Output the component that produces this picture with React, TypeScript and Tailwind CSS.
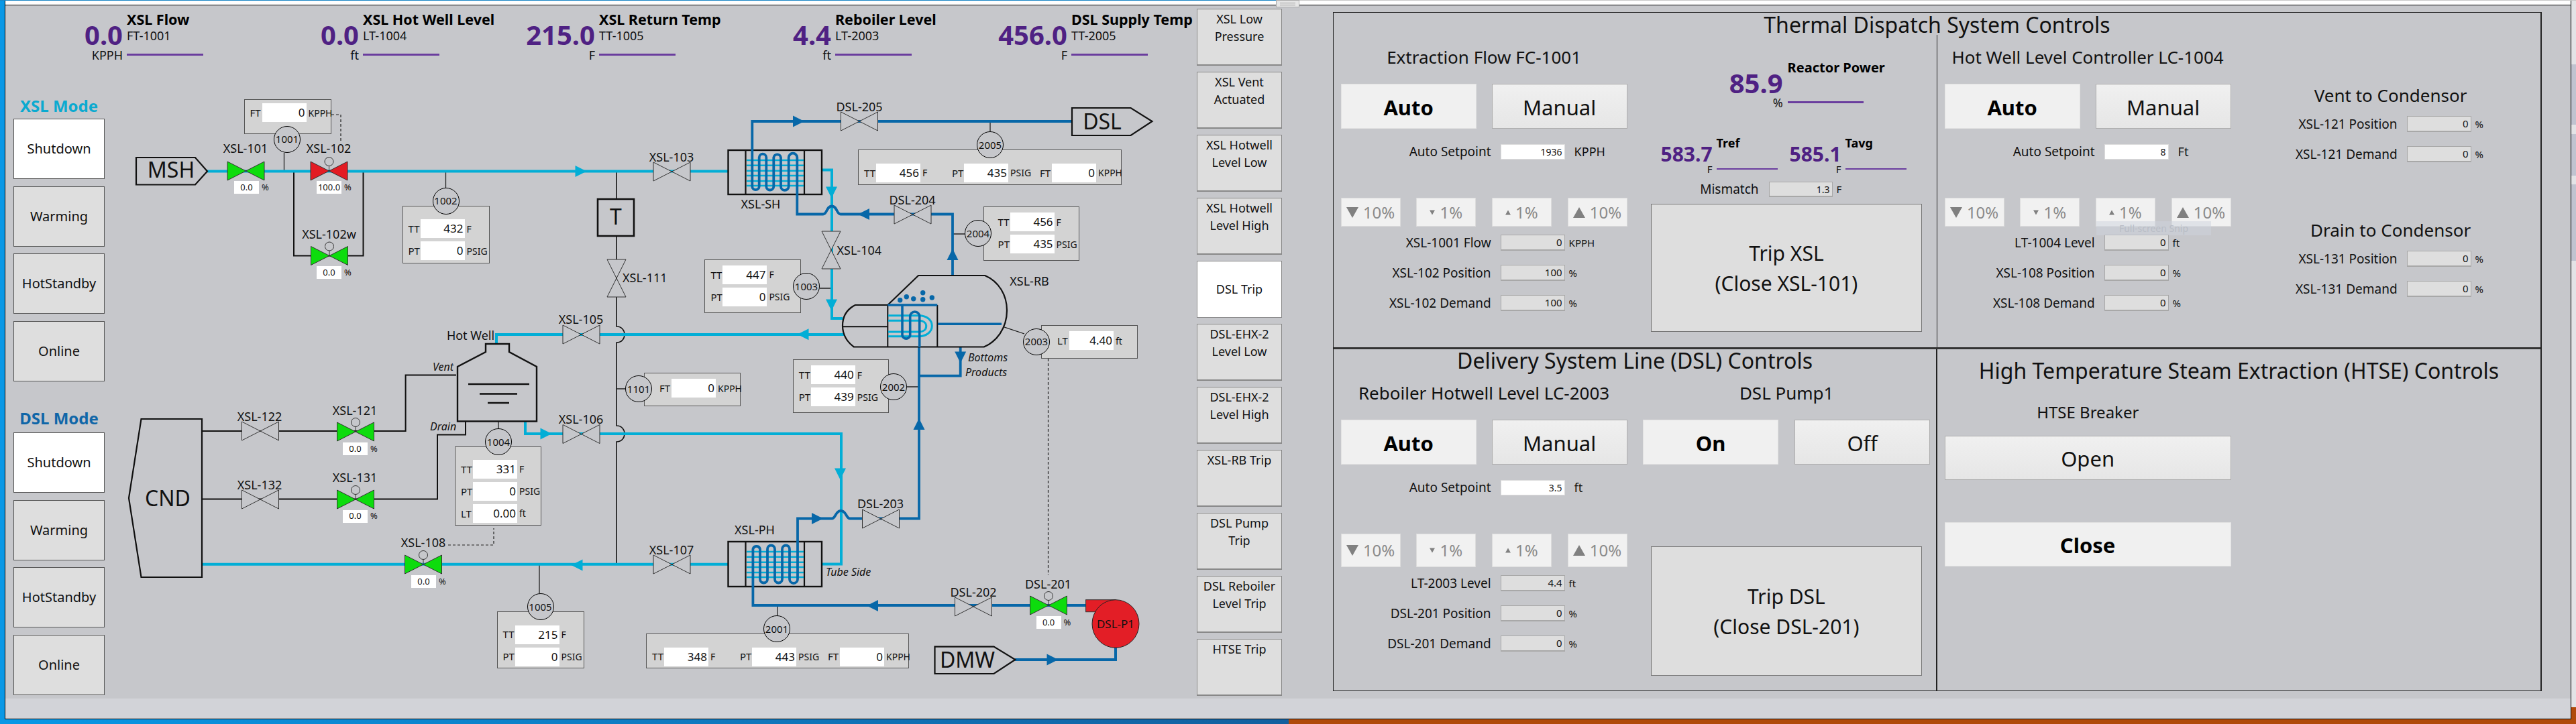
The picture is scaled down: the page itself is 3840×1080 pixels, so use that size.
import React from "react";

const CYAN = "#02aed6";
const BLUE = "#0767a8";
// page position of the diagram canvas
const OX = 160;
const OY = 98;

function Kpi({ name, tag, value, unit }: { name: string; tag: string; value: string; unit: string }) {
  return (
    <div className="flex w-[352px] shrink-0">
      <div className="flex w-[120px] flex-col items-end pt-[25px]">
        <div className="h-[38px] text-[40px] leading-[38px] font-bold text-[#4f2183]">{value}</div>
        <div className="h-[22px] text-[18px] leading-[22px]">{unit}</div>
      </div>
      <div className="ml-[6px] flex flex-col pt-[8px]">
        <div className="h-[26px] text-[21.5px] leading-[26px] font-bold whitespace-nowrap text-black">{name}</div>
        <div className="h-[22px] text-[18px] leading-[22px]">{tag}</div>
        <div className="mt-[16px] h-[3px] w-[114px] bg-[#6a3d9e]" />
      </div>
    </div>
  );
}

function ModeButton({ label, active }: { label: string; active?: boolean }) {
  return (
    <div className={`flex h-[90px] w-[136px] items-center justify-center border border-[#555] text-[20px] ${active ? "bg-white" : "bg-[#dedede]"}`}>
      {label}
    </div>
  );
}

function ModeColumn() {
  return (
    <div className="flex w-[152px] shrink-0 flex-col pl-[12px]">
      <div className="mt-[45px] h-[30px] w-[136px] text-center text-[24px] leading-[30px] font-bold whitespace-nowrap text-[#0baad0]">XSL Mode</div>
      <div className="mt-[4px] flex flex-col gap-[10.7px]">
        {["Shutdown", "Warming", "HotStandby", "Online"].map((m, i) => (
          <ModeButton key={m} label={m} active={i === 0} />
        ))}
      </div>
      <div className="mt-[40px] h-[30px] w-[136px] text-center text-[24px] leading-[30px] font-bold whitespace-nowrap text-[#0f66a8]">DSL Mode</div>
      <div className="mt-[6px] flex flex-col gap-[10.7px]">
        {["Shutdown", "Warming", "HotStandby", "Online"].map((m, i) => (
          <ModeButton key={m} label={m} active={i === 0} />
        ))}
      </div>
    </div>
  );
}

function Valve({ x, y, color, stem, vertical }: { x: number; y: number; color?: string; stem?: boolean; vertical?: boolean }) {
  const fill = color ?? "#c6c7cb";
  if (vertical) {
    return (
      <polygon
        points={`${x - 14},${y - 28} ${x + 14},${y - 28} ${x - 14},${y + 28} ${x + 14},${y + 28}`}
        fill={fill}
        stroke="#333"
        strokeWidth="1"
      />
    );
  }
  return (
    <g stroke="#333" strokeWidth="1">
      <polygon points={`${x - 27.5},${y - 14} ${x + 27.5},${y + 14} ${x + 27.5},${y - 14} ${x - 27.5},${y + 14}`} fill={fill} />
      {stem && (
        <>
          <line x1={x} y1={y} x2={x} y2={y - 8} />
          <circle cx={x} cy={y - 14} r="6.5" fill="#c6c7cb" />
        </>
      )}
    </g>
  );
}

function Arrow({ x, y, dir, color }: { x: number; y: number; dir: "r" | "l" | "u" | "d"; color: string }) {
  const pts = {
    r: `${x - 8.5},${y - 8.5} ${x + 8.5},${y} ${x - 8.5},${y + 8.5}`,
    l: `${x + 8.5},${y - 8.5} ${x - 8.5},${y} ${x + 8.5},${y + 8.5}`,
    u: `${x - 8.5},${y + 8.5} ${x},${y - 8.5} ${x + 8.5},${y + 8.5}`,
    d: `${x - 8.5},${y - 8.5} ${x},${y + 8.5} ${x + 8.5},${y - 8.5}`,
  }[dir];
  return <polygon points={pts} fill={color} />;
}

const TUBE_LINES = [15, 22.7, 30.7, 38, 46, 53];

function Piping() {
  return (
    <svg className="absolute left-0 top-0" width="1624" height="944" viewBox={`${OX} ${OY} 1624 944`} fill="none">
      {/* instrument taps and dashed signals */}
      <path d="M423.5 228V255M664.5 255V280M1476 181V196M932 580H919M1222 430H1239M1352 577H1370M1438 349H1420M1159 903V918M804 842V885M743 628V640M1493 486.7L1527 498" stroke="#222" strokeWidth="1.3" />
      <path d="M494 171H508V211M668 813H736V788M1562.5 535V858" stroke="#222" strokeWidth="1.2" strokeDasharray="4 3" />

      {/* cold side and vent lines */}
      <path d="M438 255V381.5H541.5V255M301 643H604.6V559.6H680M301 744.5H652V648.5H694V628" stroke="#111" strokeWidth="2" />
      <path d="M919 255V487C927 487 931 493 931 499C931 505 927 511 919 511V635C927 635 931 641 931 647C931 653 927 659 919 659V841" stroke="#111" strokeWidth="1.6" />

      {/* steam side */}
      <path d="M309 255.5H1085.5M740 522V499H1258M783 628V647H1254V841.5H1225M301 841.7H1085.5M1225 253.5H1240V475H1256" stroke={CYAN} strokeWidth="4" />

      {/* heat exchangers */}
      {[224, 808].map((top) => (
        <g key={top}>
          <rect x="1085.5" y={top} width="139.5" height={top === 224 ? 66 : 67} fill="#c6c7cb" stroke="#111" strokeWidth="2.4" />
          <path d={`M1111.5 ${top}v67M1199 ${top}v67`} stroke="#111" strokeWidth="2.2" />
          {TUBE_LINES.map((d) => (
            <line key={d} x1="1113" x2="1198" y1={top + d} y2={top + d} stroke={CYAN} strokeWidth="2.6" />
          ))}
        </g>
      ))}

      {/* delivery side */}
      <path
        d="M1598 181H1121.3V278A5.2 5.2 0 0 0 1131.7 278V235A5.3 5.3 0 0 1 1142.3 235V278A5.5 5.5 0 0 0 1153.3 278V235A5.4 5.4 0 0 1 1164 235V278A5.8 5.8 0 0 0 1175.7 278V235A6.3 6.3 0 0 1 1188.3 235V319.5H1227C1233 319.5 1232 307.5 1240 307.5C1248 307.5 1247 319.5 1253 319.5H1420V411"
        stroke={BLUE}
        strokeWidth="3.8"
      />
      <path
        d="M1618 903H1122.4V819A5.5 5.5 0 0 1 1133 819V864A5.5 5.5 0 0 0 1144 864V819A5.5 5.5 0 0 1 1155 819V864A5.5 5.5 0 0 0 1166 864V819A5.5 5.5 0 0 1 1177 819V864A6 6 0 0 0 1189 864V773.5H1240C1246 773.5 1245 762 1253.5 762C1262 762 1261 773.5 1267 773.5H1370V518M1431.7 518V560.7H1370"
        stroke={BLUE}
        strokeWidth="3.8"
      />
      <path d="M1513 984H1663V960" stroke={BLUE} strokeWidth="4" />

      {/* reboiler */}
      <path d="M1275 455H1323.3L1369 411H1468.3C1489 420 1501 440 1501 463C1501 490 1485 510 1466.7 517.5H1273C1262 510 1256 498 1256 486C1256 472 1263 461 1275 455Z" fill="#c6c7cb" stroke="#111" strokeWidth="2.2" />
      <path d="M1256 487.3H1323.3M1323.3 455V517M1397.3 455V517" stroke="#111" strokeWidth="2" />
      <path d="M1324 470.7H1370C1381 470.7 1389.3 477 1389.3 486C1389.3 495 1381 501.7 1370 501.7H1324M1324 478.3H1370C1376 478.3 1380.7 481 1380.7 486.7C1380.7 492 1376 495 1370 495H1324" stroke={CYAN} strokeWidth="3" />
      <path d="M1323.3 455H1397.3M1345 455V500A5.9 5.9 0 0 0 1356.7 500V472A6.9 6.9 0 0 1 1370.7 472V518M1398 483.3H1493" stroke={BLUE} strokeWidth="3.6" />
      {[[1341.7, 447.7], [1351.3, 442.7], [1361.7, 445.7], [1375.7, 436.7], [1375.7, 446.7], [1389.3, 444]].map(([cx, cy]) => (
        <circle key={`${cx}-${cy}`} cx={cx} cy={cy} r="3.7" fill={BLUE} />
      ))}

      {/* hot well */}
      <path d="M724 513H759V525L800 547V628.5H682V547L724 525Z" fill="#c6c7cb" stroke="#111" strokeWidth="2.4" />
      <path d="M698 573H789M715 587.5H771M727 601H759" stroke="#111" strokeWidth="2.4" />

      {/* tags */}
      <g fill="#c6c7cb" stroke="#111" strokeWidth="2.2">
        <polygon points="203,235 291,235 309,255.5 291,275.5 203,275.5" />
        <polygon points="1598,161 1685.6,161 1717.5,181 1685.6,202 1598,202" />
        <polygon points="1393.5,964.6 1481.5,964.6 1513.4,984 1481.5,1005 1393.5,1005" />
        <polygon points="210.5,625 301,625 301,861 210.5,861 192,743" />
        <rect x="891" y="297" width="54" height="55" strokeWidth="2.6" />
      </g>

      {/* valves */}
      <Valve x={366.5} y={255} color="#0ddc0d" />
      <Valve x={490.5} y={255} color="#e31b23" stem />
      <Valve x={491} y={381.5} color="#0ddc0d" stem />
      <Valve x={530} y={644} color="#0ddc0d" stem />
      <Valve x={530} y={745} color="#0ddc0d" stem />
      <Valve x={631} y={842} color="#0ddc0d" stem />
      <Valve x={1563} y={903} color="#0ddc0d" stem />
      <Valve x={388} y={643} />
      <Valve x={388} y={745} />
      <Valve x={866.5} y={499} />
      <Valve x={866.5} y={647.5} />
      <Valve x={1001.5} y={256} />
      <Valve x={1001.5} y={842} />
      <Valve x={1281} y={181} />
      <Valve x={1360.5} y={320} />
      <Valve x={1313} y={774} />
      <Valve x={1451} y={905} />
      <Valve x={919} y={415} vertical />
      <Valve x={1239} y={373} vertical />

      {/* flow arrows */}
      <Arrow x={866} y={255.5} dir="r" color={CYAN} />
      <Arrow x={860} y={843} dir="l" color={CYAN} />
      <Arrow x={814} y={647} dir="r" color={CYAN} />
      <Arrow x={1197} y={498.7} dir="l" color={CYAN} />
      <Arrow x={1239.5} y={287} dir="d" color={CYAN} />
      <Arrow x={1239.5} y={455} dir="d" color={CYAN} />
      <Arrow x={1252.5} y={707} dir="d" color={CYAN} />
      <Arrow x={1190.5} y={181} dir="r" color={BLUE} />
      <Arrow x={1287.5} y={319.5} dir="l" color={BLUE} />
      <Arrow x={1420} y={379.5} dir="u" color={BLUE} />
      <Arrow x={1218.5} y={773.5} dir="r" color={BLUE} />
      <Arrow x={1370} y={632.5} dir="u" color={BLUE} />
      <Arrow x={1300.5} y={903.5} dir="l" color={BLUE} />
      <Arrow x={1569} y={984} dir="r" color={BLUE} />
      <Arrow x={1431.7} y={533} dir="d" color={BLUE} />

      {/* pump */}
      <rect x="1618.6" y="894.7" width="44" height="18" fill="#e31e26" stroke="#333" strokeWidth="1" />
      <ellipse cx="1663" cy="930.5" rx="35" ry="35.8" fill="#e31e26" stroke="#222" strokeWidth="1" />
    </svg>
  );
}

const CENTER_LABELS: [string, number, number][] = [
  ["XSL-101", 366, 221], ["XSL-102", 490, 221], ["XSL-102w", 490.5, 348.5], ["XSL-103", 1001, 234],
  ["XSL-105", 866, 476], ["XSL-106", 866, 625], ["XSL-107", 1001, 820], ["XSL-108", 631, 809],
  ["XSL-121", 529, 611.6], ["XSL-122", 387, 621], ["XSL-131", 529, 711.5], ["XSL-132", 387, 722.5],
  ["DSL-205", 1281, 159], ["DSL-204", 1360, 297.5], ["DSL-203", 1312.5, 751.4], ["DSL-202", 1451, 882.6],
  ["DSL-201", 1562.5, 870.6], ["XSL-SH", 1134, 304], ["XSL-PH", 1125, 790], ["XSL-RB", 1534.5, 419.4],
  ["Hot Well", 701.5, 500],
];

const LEFT_LABELS: [string, number, number][] = [
  ["XSL-111", 928, 414],
  ["XSL-104", 1247.5, 373],
];

const ITALIC_LABELS: [string, number, number][] = [
  ["Vent", 645, 547], ["Drain", 641, 636], ["Bottoms", 1443, 533], ["Products", 1439, 554.5], ["Tube Side", 1231, 853.4],
];

const TAGS: [string, number, number][] = [
  ["MSH", 255, 253], ["DSL", 1643, 181], ["CND", 250, 743], ["DMW", 1442, 983.5], ["T", 918, 323],
];

const CIRCLES: [string, number, number][] = [
  ["1001", 428, 207.6], ["1002", 664.5, 299.6], ["1003", 1202, 427.3], ["2004", 1458, 348], ["2005", 1476, 216],
  ["1101", 952, 580], ["1004", 743, 659], ["1005", 805.5, 905], ["2001", 1158, 938.4], ["2002", 1332, 577], ["2003", 1545, 509.6],
];

const READOUTS: [string, number, number][] = [
  ["0.0", 349, 270], ["100.0", 472, 270], ["0.0", 472, 397], ["0.0", 511, 660], ["0.0", 511, 760.4], ["0.0", 613, 858], ["0.0", 1544.6, 918.8],
];

type Cell = { l: string; v: string; u: string };
type Box = { x: number; y: number; w: number; h: number; pt: number; pl: number; rows: Cell[][] };

const tp = (t: string, p: string): Cell[][] => [
  [{ l: "TT", v: t, u: "F" }],
  [{ l: "PT", v: p, u: "PSIG" }],
];

const BOXES: Box[] = [
  { x: 363.5, y: 148, w: 130, h: 52, pt: 5, pl: 0, rows: [[{ l: "FT", v: "0", u: "KPPH" }]] },
  { x: 599.5, y: 306.5, w: 130, h: 86, pt: 19.5, pl: 0, rows: tp("432", "0") },
  { x: 1050.4, y: 387.4, w: 144, h: 80, pt: 7.6, pl: 0, rows: tp("447", "0") },
  { x: 1465.6, y: 308, w: 143.4, h: 80.5, pt: 8, pl: 13, rows: tp("456", "435") },
  { x: 1181.8, y: 536, w: 143.2, h: 80.4, pt: 8, pl: 0, rows: tp("440", "439") },
  { x: 740.5, y: 912, w: 130, h: 85, pt: 19.5, pl: 0, rows: tp("215", "0") },
  { x: 678, y: 665.7, w: 129, h: 118.8, pt: 19.3, pl: 0, rows: [...tp("331", "0"), [{ l: "LT", v: "0.00", u: "ft" }]] },
  { x: 960, y: 555.5, w: 144, h: 50, pt: 8.5, pl: 14, rows: [[{ l: "FT", v: "0", u: "KPPH" }]] },
  { x: 1552, y: 484.5, w: 144.4, h: 50, pt: 8.5, pl: 15, rows: [[{ l: "LT", v: "4.40", u: "ft" }]] },
  {
    x: 1279, y: 223, w: 392.6, h: 52.5, pt: 19.8, pl: 0,
    rows: [[{ l: "TT", v: "456", u: "F" }, { l: "PT", v: "435", u: "PSIG" }, { l: "FT", v: "0", u: "KPPH" }]],
  },
  {
    x: 963, y: 945.3, w: 391.6, h: 52, pt: 19.3, pl: 0,
    rows: [[{ l: "TT", v: "348", u: "F" }, { l: "PT", v: "443", u: "PSIG" }, { l: "FT", v: "0", u: "KPPH" }]],
  },
];

function InstrumentBox({ box }: { box: Box }) {
  return (
    <div
      className="absolute flex flex-col gap-[5px] border border-[#555] bg-[#d3d3d3]"
      style={{ left: box.x - OX, top: box.y - OY, width: box.w, height: box.h, paddingTop: box.pt, paddingLeft: box.pl }}
    >
      {box.rows.map((row, i) => (
        <div key={i} className="flex h-[28px]">
          {row.map((c) => (
            <div key={c.l} className="flex w-[131px] shrink-0 items-center">
              <span className="w-[26px] pl-[8px] text-[15px]">{c.l}</span>
              <span className="flex h-[28px] w-[66px] items-center justify-end bg-white pr-[2px] text-[17px]">{c.v}</span>
              <span className="ml-[3px] text-[14px] whitespace-nowrap">{c.u}</span>
            </div>
          ))}
        </div>
      ))}
    </div>
  );
}

function Diagram() {
  return (
    <div className="relative h-[944px] w-[1624px] shrink-0 text-[#111]">
      <Piping />
      {BOXES.map((b) => (
        <InstrumentBox key={`${b.x}-${b.y}`} box={b} />
      ))}
      {CIRCLES.map(([n, x, y]) => (
        <div
          key={n}
          className="absolute flex h-[40px] w-[40px] -translate-x-1/2 -translate-y-1/2 items-center justify-center rounded-full border border-black bg-[#c6c7cb] text-[15px]"
          style={{ left: x - OX, top: y - OY }}
        >
          {n}
        </div>
      ))}
      {CENTER_LABELS.map(([t, x, y]) => (
        <span key={t} className="absolute -translate-x-1/2 -translate-y-1/2 text-[18px] whitespace-nowrap" style={{ left: x - OX, top: y - OY }}>
          {t}
        </span>
      ))}
      {LEFT_LABELS.map(([t, x, y]) => (
        <span key={t} className="absolute -translate-y-1/2 text-[18px] whitespace-nowrap" style={{ left: x - OX, top: y - OY }}>
          {t}
        </span>
      ))}
      {ITALIC_LABELS.map(([t, x, y]) => (
        <span key={t} className="absolute -translate-y-1/2 text-[16px] whitespace-nowrap italic" style={{ left: x - OX, top: y - OY }}>
          {t}
        </span>
      ))}
      {TAGS.map(([t, x, y]) => (
        <span key={t} className="absolute -translate-x-1/2 -translate-y-1/2 text-[32px]" style={{ left: x - OX, top: y - OY }}>
          {t}
        </span>
      ))}
      <span className="absolute -translate-x-1/2 -translate-y-1/2 text-[17px] whitespace-nowrap" style={{ left: 1663 - OX, top: 931 - OY }}>
        DSL-P1
      </span>
      {READOUTS.map(([v, x, y]) => (
        <div key={`${x}-${y}`} className="absolute flex items-center text-[13px]" style={{ left: x - OX, top: y - OY }}>
          <span className="flex h-[19px] w-[37px] items-center justify-center bg-white">{v}</span>
          <span className="ml-[4px]">%</span>
        </div>
      ))}
    </div>
  );
}

const ALARMS: [string, string?][] = [
  ["XSL Low", "Pressure"], ["XSL Vent", "Actuated"], ["XSL Hotwell", "Level Low"], ["XSL Hotwell", "Level High"],
  ["DSL Trip"], ["DSL-EHX-2", "Level Low"], ["DSL-EHX-2", "Level High"], ["XSL-RB Trip"],
  ["DSL Pump", "Trip"], ["DSL Reboiler", "Level Trip"], ["HTSE Trip"],
];

function AlarmColumn() {
  return (
    <div className="flex w-[127px] shrink-0 flex-col gap-[9.5px] pt-[5px]">
      {ALARMS.map(([a, b]) =>
        a === "DSL Trip" ? (
          <div key={a} className="flex h-[84.5px] items-center justify-center border border-[#888] bg-white text-[18px]">
            {a}
          </div>
        ) : (
          <div key={a + b} className="flex h-[84.5px] flex-col items-center border border-b-2 border-[#888] bg-[#dedede] pt-[1px] text-[18px] leading-[26px] whitespace-nowrap">
            <span>{a}</span>
            {b && <span>{b}</span>}
          </div>
        ),
      )}
    </div>
  );
}

function ReadRow({ label, value, unit, labelClass }: { label: string; value: string; unit: string; labelClass: string }) {
  return (
    <div className="flex h-[24px] items-center">
      <span className={`text-right text-[19px] whitespace-nowrap ${labelClass}`}>{label}</span>
      <span className="ml-[14px] flex h-[24px] w-[96px] items-center justify-end border border-b-2 border-[#a8a8a8] bg-[#dedede] pr-[3px] text-[15px]">{value}</span>
      <span className="ml-[6px] text-[15px]">{unit}</span>
    </div>
  );
}

function Triangle({ up, big }: { up?: boolean; big?: boolean }) {
  return (
    <svg className={big ? "h-[16px] w-[18px]" : "h-[8px] w-[8px]"} viewBox="0 0 18 16">
      <polygon points={up ? "0,16 9,0 18,16" : "0,0 18,0 9,16"} fill="#808080" />
    </svg>
  );
}

function StepButton({ label, up, big, heightClass }: { label: string; up?: boolean; big?: boolean; heightClass: string }) {
  return (
    <div className={`flex w-[89px] items-center justify-center gap-[7px] border border-[#dcdcdc] bg-[#f1f1f1] text-[24px] text-[#8a8a8a] ${heightClass}`}>
      <Triangle up={up} big={big} />
      {label}
    </div>
  );
}

function ToggleButton({ label, active, className }: { label: string; active?: boolean; className: string }) {
  return (
    <div
      className={`flex items-center justify-center border pt-[3px] text-[31px] ${
        active ? "border-[#e2e2e2] bg-[#f0f0f0] font-bold text-black" : "border-[#adadad] bg-linear-to-b from-[#f0f0f0] to-[#e6e6e6]"
      } ${className}`}
    >
      {label}
    </div>
  );
}

type Read = [string, string, string];

function Controller({ title, setpoint, setUnit, reads, titleClass, stepClass }: {
  title: string;
  setpoint: string;
  setUnit: string;
  reads: Read[];
  titleClass: string;
  stepClass: string;
}) {
  return (
    <div className="flex w-[427px] shrink-0 flex-col">
      <div className={`h-[30px] text-center text-[26px] leading-[30px] whitespace-nowrap ${titleClass}`}>{title}</div>
      <div className="mt-[25px] flex justify-between">
        <ToggleButton label="Auto" active className="h-[67px] w-[202px]" />
        <ToggleButton label="Manual" className="h-[67px] w-[202px]" />
      </div>
      <div className="mt-[23px] flex h-[23px] items-center">
        <span className="w-[224px] text-right text-[19px]">Auto Setpoint</span>
        <span className="ml-[14px] flex h-[23px] w-[96px] items-center justify-end border border-[#dcdcdc] bg-white pr-[3px] text-[14px]">{setpoint}</span>
        <span className="ml-[14px] text-[18px]">{setUnit}</span>
      </div>
      <div className="mt-[57px] flex justify-between">
        <StepButton label="10%" big heightClass={stepClass} />
        <StepButton label="1%" heightClass={stepClass} />
        <StepButton label="1%" up heightClass={stepClass} />
        <StepButton label="10%" up big heightClass={stepClass} />
      </div>
      <div className="mt-[12px] flex flex-col gap-[21px]">
        {reads.map(([l, v, u]) => (
          <ReadRow key={l} label={l} value={v} unit={u} labelClass="w-[224px]" />
        ))}
      </div>
    </div>
  );
}

function TripButton({ lines, className }: { lines: [string, string]; className: string }) {
  return (
    <div className={`ml-[35.6px] flex w-[403.5px] flex-col items-center justify-center border border-[#777] bg-[#dedede] text-[30px] leading-[45px] ${className}`}>
      <span>{lines[0]}</span>
      <span>{lines[1]}</span>
    </div>
  );
}

function PowerColumn() {
  return (
    <div className="flex flex-1 flex-col">
      {/* reactor power */}
      <div className="flex">
        <div className="mt-[53px] flex w-[232px] flex-col items-end">
          <div className="h-[38px] text-[40px] leading-[38px] font-bold text-[#4f2183]">85.9</div>
          <div className="h-[20px] text-[18px] leading-[20px]">%</div>
        </div>
        <div className="mt-[36px] ml-[7px] flex flex-col">
          <div className="h-[26px] text-[20px] leading-[26px] font-bold whitespace-nowrap text-black">Reactor Power</div>
          <div className="mt-[37px] h-[3px] w-[113px] bg-[#6a3d9e]" />
        </div>
      </div>
      {/* tref and tavg */}
      <div className="mt-[37.5px] flex">
        {[["583.7", "Tref"], ["585.1", "Tavg"]].map(([v, n]) => (
          <div key={n} className="flex w-[192px] shrink-0">
            <div className="mt-[14.5px] flex w-[127px] shrink-0 flex-col items-end">
              <div className="h-[30px] text-[30px] leading-[30px] font-bold text-[#4f2183]">{v}</div>
              <div className="h-[14px] text-[15px] leading-[14px]">F</div>
            </div>
            <div className="ml-[6px] flex shrink-0 flex-col">
              <div className="h-[24px] text-[18px] leading-[24px] font-bold text-black">{n}</div>
              <div className="mt-[26px] h-[2px] w-[91px] bg-[#6a3d9e]" />
            </div>
          </div>
        ))}
      </div>
      {/* mismatch */}
      <div className="mt-[12px] flex h-[23px] items-center">
        <span className="w-[196px] text-right text-[19px]">Mismatch</span>
        <span className="ml-[15px] flex h-[23px] w-[95px] items-center justify-end border border-b-2 border-[#a8a8a8] bg-[#dedede] pr-[3px] text-[14px]">1.3</span>
        <span className="ml-[6px] text-[15px]">F</span>
      </div>
      <TripButton lines={["Trip XSL", "(Close XSL-101)"]} className="mt-[10px] h-[191px]" />
    </div>
  );
}

function CondenserGroup({ title, a, topClass }: { title: string; a: string; topClass: string }) {
  return (
    <div className={`flex flex-col ${topClass}`}>
      <div className="h-[30px] w-[476px] text-center text-[26px] leading-[30px]">{title}</div>
      <div className="mt-[16px] flex flex-col gap-[21px]">
        <ReadRow label={`${a} Position`} value="0" unit="%" labelClass="w-[248px]" />
        <ReadRow label={`${a} Demand`} value="0" unit="%" labelClass="w-[248px]" />
      </div>
    </div>
  );
}

function ControlPanel() {
  return (
    <div className="mt-[10px] ml-[76px] flex h-[1013px] w-[1802px] shrink-0 flex-col border border-r-2 border-[#222] text-[#111]">
      <div className="h-[33px] pt-[1px] text-center text-[32px] leading-[34px]">Thermal Dispatch System Controls</div>
      <div className="flex h-[466px]">
        <div className="flex w-[900px] shrink-0 border-r border-[#222] pl-[10.6px]">
          <Controller
            title="Extraction Flow FC-1001"
            setpoint="1936"
            setUnit="KPPH"
            titleClass="mt-[18px]"
            stepClass="h-[43px]"
            reads={[["XSL-1001 Flow", "0", "KPPH"], ["XSL-102 Position", "100", "%"], ["XSL-102 Demand", "100", "%"]]}
          />
          <PowerColumn />
        </div>
        <div className="flex flex-1 pl-[10.6px]">
          <Controller
            title="Hot Well Level Controller LC-1004"
            setpoint="8"
            setUnit="Ft"
            titleClass="mt-[18px]"
            stepClass="h-[43px]"
            reads={[["LT-1004 Level", "0", "ft"], ["XSL-108 Position", "0", "%"], ["XSL-108 Demand", "0", "%"]]}
          />
          <div className="flex flex-col">
            <CondenserGroup title="Vent to Condensor" a="XSL-121" topClass="mt-[75px]" />
            <CondenserGroup title="Drain to Condensor" a="XSL-131" topClass="mt-[86px]" />
          </div>
        </div>
      </div>
      <div className="h-[3px] bg-[#333]" />
      <div className="flex flex-1">
        <div className="flex w-[900px] shrink-0 flex-col border-r-2 border-[#222]">
          <div className="h-[34px] text-center text-[32px] leading-[34px]">Delivery System Line (DSL) Controls</div>
          <div className="flex pl-[10.6px]">
            <Controller
              title="Reboiler Hotwell Level LC-2003"
              setpoint="3.5"
              setUnit="ft"
              titleClass="mt-[16px]"
              stepClass="h-[50px]"
              reads={[["LT-2003 Level", "4.4", "ft"], ["DSL-201 Position", "0", "%"], ["DSL-201 Demand", "0", "%"]]}
            />
            <div className="ml-[23.6px] flex flex-col">
              <div className="mt-[16px] h-[30px] w-[428px] text-center text-[26px] leading-[30px]">DSL Pump1</div>
              <div className="mt-[25px] flex justify-between">
                <ToggleButton label="On" active className="h-[67px] w-[202px]" />
                <ToggleButton label="Off" className="h-[67px] w-[202px]" />
              </div>
              <div className="mt-[122px] -ml-[23.6px]">
                <TripButton lines={["Trip DSL", "(Close DSL-201)"]} className="h-[193px]" />
              </div>
            </div>
          </div>
        </div>
        <div className="flex flex-1 flex-col">
          <div className="mt-[16.5px] h-[30px] text-center text-[32px] leading-[30px]">High Temperature Steam Extraction (HTSE) Controls</div>
          <div className="flex w-[438px] flex-col pl-[10.6px]">
            <div className="mt-[32px] h-[30px] text-center text-[24px] leading-[30px]">HTSE Breaker</div>
            <ToggleButton label="Open" className="mt-[20px] h-[66.4px] w-[427px]" />
            <ToggleButton label="Close" active className="mt-[63px] h-[66px] w-[427px]" />
          </div>
        </div>
      </div>
    </div>
  );
}

export default function App() {
  return (
    <div className="relative flex h-[1080px] w-[3840px] flex-col overflow-hidden bg-[linear-gradient(90deg,#0a98e6_0,#13609f_1921px,#b04a0a_1921px)] font-['Noto_Sans','Liberation_Sans',sans-serif] text-[#111]">
      <div className="flex h-px shrink-0">
        <div className="w-[1921px] bg-[#1a85c5]" />
        <div className="flex-1 bg-[#c8c8c8]" />
      </div>
      <div className="flex flex-1">
        <div className="ml-[7px] flex h-[1072px] w-[3826px] shrink-0 flex-col border-x border-b border-black">
          <div className="h-[7px] shrink-0 border-b border-black bg-white" />
          <div className="flex h-[1034px] shrink-0 bg-[#c6c7cb]">
            <div className="flex w-[1776px] shrink-0 flex-col">
              <div className="flex h-[90px] shrink-0 pl-[55px]">
                <Kpi name="XSL Flow" tag="FT-1001" value="0.0" unit="KPPH" />
                <Kpi name="XSL Hot Well Level" tag="LT-1004" value="0.0" unit="ft" />
                <Kpi name="XSL Return Temp" tag="TT-1005" value="215.0" unit="F" />
                <Kpi name="Reboiler Level" tag="LT-2003" value="4.4" unit="ft" />
                <Kpi name="DSL Supply Temp" tag="TT-2005" value="456.0" unit="F" />
              </div>
              <div className="flex">
                <ModeColumn />
                <Diagram />
              </div>
            </div>
            <AlarmColumn />
            <ControlPanel />
          </div>
          <div className="flex-1 bg-[#d2d3d8]" />
        </div>
        {/* window behind, right edge */}
        <div className="flex h-[1054px] flex-1 flex-col bg-[#e3e3e6]">
          <div className="mt-[95px] h-[90px] bg-[#c0c3d0]" />
          <div className="mt-[14px] h-[62px] bg-[#c0c3d0]" />
          <div className="mt-[13px] h-[114px] bg-[#c0c3d0]" />
        </div>
      </div>
      {/* splitter grip */}
      <div className="absolute top-0 left-[1902px] flex h-[11px] w-[35px] flex-col justify-center gap-[2px] border border-[#aaa] bg-[#e6e6e6] px-[5px]">
        <div className="h-px bg-[#999]" />
        <div className="h-px bg-[#999]" />
      </div>
      {/* snipping tool tooltip */}
      <div className="absolute top-[330px] left-[3125px] flex h-[21px] w-[171px] items-center justify-center bg-[#cdd3de]/50 text-[14px] text-[#b9bdc6]">
        Full-screen Snip
      </div>
    </div>
  );
}
